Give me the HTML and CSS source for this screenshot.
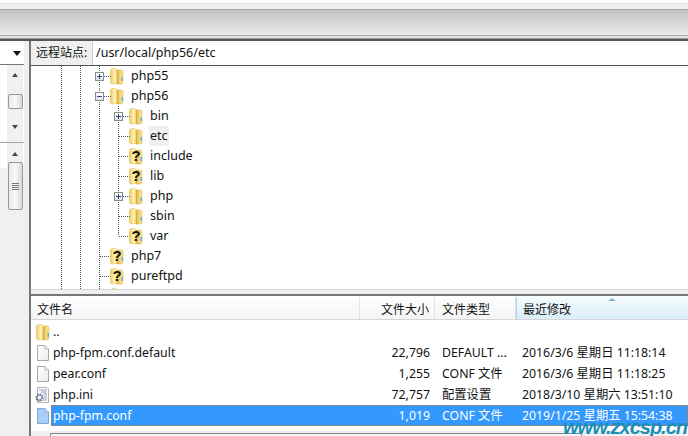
FILE: index.html
```html
<!DOCTYPE html>
<html lang="zh">
<head>
<meta charset="utf-8">
<title>FileZilla</title>
<link rel="stylesheet" href="styles.css">
</head>
<body>
<svg class="defs" width="0" height="0" aria-hidden="true">
  <defs>
    <linearGradient id="fg" x1="0" x2="1" y1="0" y2="0">
      <stop offset="0" stop-color="#eecb62"/><stop offset=".6" stop-color="#fff3b4"/><stop offset="1" stop-color="#f6dd86"/>
    </linearGradient>
    <linearGradient id="fr" x1="0" x2="1" y1="0" y2="0">
      <stop offset="0" stop-color="#d3a53c"/><stop offset=".35" stop-color="#f0cd62"/><stop offset="1" stop-color="#fbe99c"/>
    </linearGradient>
    <linearGradient id="dg" x1="0" x2="1" y1="0" y2="1">
      <stop offset="0" stop-color="#fff"/><stop offset="1" stop-color="#ececec"/>
    </linearGradient>
    <symbol id="folder" viewBox="0 0 14 18">
      <path d="M.5 2.500l2-1h3l2 1.500V16.500l-5.500.5-1.500-1z" fill="url(#fg)" stroke="#dfba55" stroke-width=".5"/>
      <path d="M7 3h5l1 1.500V16l-1 1H7z" fill="url(#fr)" stroke="#d6af4e" stroke-width=".5"/>
      <rect x="11.500" y="10" width="1.500" height="4" fill="#63b0da"/>
    </symbol>
    <symbol id="tee" viewBox="0 0 19 20">
      <path d="M.5 0v20M1 10.500h12" stroke="#555" stroke-dasharray="1 1" fill="none"/>
    </symbol>
    <symbol id="ell" viewBox="0 0 19 20">
      <path d="M.5 0v10M1 10.500h12" stroke="#555" stroke-dasharray="1 1" fill="none"/>
    </symbol>
    <symbol id="doc" viewBox="0 0 14 18">
      <path d="M1.500 1.500h7.500l3.500 3.500v11.500h-11z" fill="url(#dg)" stroke="#a8a8a8"/>
      <path d="M9 1.500v3.500h3.500" fill="#f2f2f2" stroke="#bdbdbd"/>
    </symbol>
    <symbol id="docsel" viewBox="0 0 14 18">
      <path d="M1.500 1.500h7.500l3.500 3.500v11.500h-11z" fill="#a8cdf7" stroke="#7fa8d8"/>
      <path d="M9 1.500v3.500h3.500" fill="#d4e6fb" stroke="#8fb4e0"/>
    </symbol>
    <symbol id="ini" viewBox="0 0 16 18">
      <path d="M3.500 1.500h9.500l1.500 1.500v13.500h-11z" fill="#fff" stroke="#b0b0b0"/>
      <path d="M5 4h8M7 6h6M9 8h4M10 10h3M10 12h3M9 14h4" stroke="#8fa3bd"/>
      <circle cx="5.500" cy="11.500" r="3" fill="none" stroke="#51657f" stroke-width="2.200" stroke-dasharray="1.400 .9"/>
      <circle cx="5.500" cy="11.500" r="2.300" fill="none" stroke="#7f95b2"/>
    </symbol>
  </defs>
</svg>

<header class="toolbar"><div class="toolbar-band"></div></header>

<main class="workspace">
  <aside class="left-pane">
    <div class="combo"><span class="combo-arrow"></span></div>
    <div class="left-tree">
      <div class="scrollbar sb-top">
        <span class="arrow up"></span>
        <span class="thumb short"></span>
        <span class="arrow down"></span>
      </div>
    </div>
    <div class="left-gap"></div>
    <div class="left-list">
      <div class="scrollbar sb-bottom">
        <span class="arrow up"></span>
        <span class="thumb long"><i></i><i></i><i></i><i></i></span>
      </div>
    </div>
  </aside>

  <section class="right-pane">
    <div class="address">
      <span class="address-label">远程站点:</span>
      <span class="address-value">/usr/local/php56/etc</span>
    </div>

    <div class="tree">
      <div class="row"><i class="g"></i><i class="g"></i><span class="conn"><svg class="line"><use href="#tee"/></svg><b class="box plus"></b></span><svg class="folder"><use href="#folder"/></svg><span class="name">php55</span></div>
      <div class="row"><i class="g"></i><i class="g"></i><span class="conn"><svg class="line"><use href="#tee"/></svg><b class="box minus"></b></span><svg class="folder"><use href="#folder"/></svg><span class="name">php56</span></div>
      <div class="row"><i class="g"></i><i class="g"></i><i class="g"></i><span class="conn"><svg class="line"><use href="#tee"/></svg><b class="box plus"></b></span><svg class="folder"><use href="#folder"/></svg><span class="name">bin</span></div>
      <div class="row"><i class="g"></i><i class="g"></i><i class="g"></i><span class="conn"><svg class="line"><use href="#tee"/></svg></span><svg class="folder"><use href="#folder"/></svg><span class="name current">etc</span></div>
      <div class="row"><i class="g"></i><i class="g"></i><i class="g"></i><span class="conn"><svg class="line"><use href="#tee"/></svg></span><span class="q"><svg class="folder"><use href="#folder"/></svg><em>?</em></span><span class="name">include</span></div>
      <div class="row"><i class="g"></i><i class="g"></i><i class="g"></i><span class="conn"><svg class="line"><use href="#tee"/></svg></span><span class="q"><svg class="folder"><use href="#folder"/></svg><em>?</em></span><span class="name">lib</span></div>
      <div class="row"><i class="g"></i><i class="g"></i><i class="g"></i><span class="conn"><svg class="line"><use href="#tee"/></svg><b class="box plus"></b></span><svg class="folder"><use href="#folder"/></svg><span class="name">php</span></div>
      <div class="row"><i class="g"></i><i class="g"></i><i class="g"></i><span class="conn"><svg class="line"><use href="#tee"/></svg></span><svg class="folder"><use href="#folder"/></svg><span class="name">sbin</span></div>
      <div class="row"><i class="g"></i><i class="g"></i><i class="g"></i><span class="conn"><svg class="line"><use href="#ell"/></svg></span><span class="q"><svg class="folder"><use href="#folder"/></svg><em>?</em></span><span class="name">var</span></div>
      <div class="row"><i class="g"></i><i class="g"></i><span class="conn"><svg class="line"><use href="#tee"/></svg></span><span class="q"><svg class="folder"><use href="#folder"/></svg><em>?</em></span><span class="name">php7</span></div>
      <div class="row"><i class="g"></i><i class="g"></i><span class="conn"><svg class="line"><use href="#tee"/></svg></span><span class="q"><svg class="folder"><use href="#folder"/></svg><em>?</em></span><span class="name">pureftpd</span></div>
      <div class="row"><i class="g"></i><i class="g"></i><span class="conn"><svg class="line"><use href="#tee"/></svg></span><svg class="folder"><use href="#folder"/></svg></div>
    </div>

    <div class="pane-gap"></div>

    <div class="listing">
      <div class="list-head">
        <span class="col c-name">文件名</span>
        <span class="col c-size">文件大小</span>
        <span class="col c-type">文件类型</span>
        <span class="col c-date sorted">最近修改</span>
      </div>
      <div class="list-body">
        <div class="list-row">
          <span class="cell c-name"><svg class="file"><use href="#folder"/></svg><span>..</span></span>
        </div>
        <div class="list-row">
          <span class="cell c-name"><svg class="file"><use href="#doc"/></svg><span>php-fpm.conf.default</span></span>
          <span class="cell c-size">22,796</span><span class="cell c-type">DEFAULT ...</span><span class="cell c-date">2016/3/6 星期日 11:18:14</span>
        </div>
        <div class="list-row">
          <span class="cell c-name"><svg class="file"><use href="#doc"/></svg><span>pear.conf</span></span>
          <span class="cell c-size">1,255</span><span class="cell c-type">CONF 文件</span><span class="cell c-date">2016/3/6 星期日 11:18:25</span>
        </div>
        <div class="list-row">
          <span class="cell c-name"><svg class="file ini"><use href="#ini"/></svg><span>php.ini</span></span>
          <span class="cell c-size">72,757</span><span class="cell c-type">配置设置</span><span class="cell c-date">2018/3/10 星期六 13:51:10</span>
        </div>
        <div class="list-row selected">
          <span class="cell c-name"><svg class="file"><use href="#docsel"/></svg><span>php-fpm.conf</span></span>
          <span class="cell c-size">1,019</span><span class="cell c-type">CONF 文件</span><span class="cell c-date">2019/1/25 星期五 15:54:38</span>
        </div>
      </div>
      <div class="hscroll"><span class="hthumb"></span></div>
    </div>
  </section>
</main>
<div class="watermark">www.zxcsp.cn</div>
</body>
</html>
```
FILE: styles.css
```css
* { box-sizing: border-box; }
html, body { margin: 0; height: 100%; }
body {
  width: 688px; height: 436px; overflow: hidden; position: relative;
  background: #f0f0f0; color: #111;
  font: 12.3px "Noto Sans", "Noto Sans CJK SC", sans-serif;
}
.defs { position: absolute; }
.toolbar { height: 41px; background: #fff; padding-top: 3px; border-bottom: 2px solid #555; }
.toolbar-band {
  height: 36px; border-top: 1px solid #e0e0e0;
  background: linear-gradient(#f0f0f0 0 5px, #a4a4a4 5px 6px, #c2c2c2 6px, #eaeaea 31px, #a8a8a8 31px 32px, #e4e4e4 32px 34px, #999 34px);
}
.workspace { display: flex; height: 395px; }
.left-pane { width: 24px; display: flex; flex-direction: column; }
.combo { height: 24px; background: #fff; border-bottom: 1px solid #777; position: relative; }
.combo-arrow { position: absolute; left: 13px; top: 10px; border: 4px solid transparent; border-top: 5px solid #111; border-bottom: 0; width: 0; height: 0; }
.left-tree { height: 76px; background: #fff; padding-left: 7px; }
.left-gap { height: 2px; border-bottom: 1px solid #a8a8a8; }
.left-list { flex: 1; padding-left: 7px; background: linear-gradient(#fff 0 25px, #f0f0f0 25px); }
.scrollbar { width: 16px; height: 100%; background: #f0f0f0; position: relative; display: flex; flex-direction: column; align-items: center; }
.arrow { width: 0; height: 0; border: 3px solid transparent; }
.arrow.up { border-bottom: 4px solid #444; border-top: 0; }
.arrow.down { border-top: 4px solid #444; border-bottom: 0; }
.sb-top .up { margin-top: 8px; }
.sb-top .short { margin-top: 17px; height: 15px; }
.sb-top .down { margin-top: 16px; }
.sb-bottom .up { margin-top: 9px; }
.thumb { width: 15px; border: 1px solid #999; border-radius: 2px; background: linear-gradient(90deg, #e8e8e8, #f8f8f8 50%, #d8d8d8); display: flex; flex-direction: column; align-items: center; justify-content: center; gap: 1px; }
.thumb.long { margin-top: 6px; height: 48px; }
.thumb i { width: 7px; height: 1px; background: #777; }

.right-pane { flex: 1; min-width: 0; margin-left: 5px; border-left: 2px solid #777; display: flex; flex-direction: column; }
.address { height: 25px; display: flex; background: #fff; border-bottom: 1px solid #555; align-items: stretch; }
.address-label { width: 62px; background: #f0f0f0; border-right: 1px solid #d0d0d0; padding-left: 5px; font-size: 12px; line-height: 24px; white-space: nowrap; }
.address-value { padding-left: 3px; font-size: 12.5px; line-height: 24px; }

.tree { height: 224px; background: #fff; overflow: hidden; padding-left: 30px; font-size: 12.5px; border-bottom: 1px solid #d8d8d8; }
.row { height: 20px; display: flex; align-items: center; }
.g { width: 19px; height: 20px; flex: none; background: repeating-linear-gradient(#555 0 1px, transparent 1px 2px) left / 1px 100% no-repeat; }
.conn { width: 19px; height: 20px; flex: none; position: relative; }
.line { width: 19px; height: 20px; display: block; }
.box { position: absolute; left: -4px; top: 6px; width: 9px; height: 9px; border: 1px solid #8a8a8a; background: linear-gradient(#fff, #dde); }
.box::before { content: ""; position: absolute; left: 1px; top: 3px; width: 5px; height: 1px; background: #2b4a8c; }
.plus::after { content: ""; position: absolute; left: 3px; top: 1px; width: 1px; height: 5px; background: #2b4a8c; }
.folder { width: 14px; height: 18px; flex: none; margin-left: -8px; margin-right: 6px; display: block; }
.q { display: flex; position: relative; flex: none; }
.q em { position: absolute; left: -8px; top: -1px; width: 14px; text-align: center; font: bold 15px/20px "Liberation Sans", sans-serif; color: #111; }
.name { padding: 0 1px; line-height: 20px; height: 20px; }
.current { background: #f0f0f0; }

.pane-gap { height: 6px; border-bottom: 2px solid #777; background: #f0f0f0; }
.listing { flex: 1; background: #fff; overflow: hidden; display: flex; flex-direction: column; }
.list-head { height: 24px; flex: none; display: flex; padding-top: 1px; background: linear-gradient(#fff, #f4f4f4); border-bottom: 1px solid #d5d5d5; font-size: 12px; }
.col { display: flex; align-items: center; padding-top: 1px; border-right: 1px solid #e3e3e3; white-space: nowrap; }
.list-body { flex: 1; padding-top: 1px; }
.list-row { height: 21px; display: flex; align-items: center; white-space: nowrap; position: relative; }
.c-name { width: 329px; flex: none; }
.col.c-name { padding-left: 6px; }
.c-size { width: 75px; flex: none; text-align: right; padding-right: 5px; }
.col.c-size { justify-content: flex-end; }
.c-type { width: 81px; flex: none; padding-left: 7px; }
.c-date { flex: 1; padding-left: 6px; }
.sorted { background: linear-gradient(#f4fbff, #d9eef9); border-left: 1px solid #a9d6ee; border-right: 0; position: relative; }
.sorted::before { content: ""; position: absolute; left: 91px; top: 1px; border: 4px solid transparent; border-top: 0; border-bottom: 3px solid #8ab4cc; }
.cell { line-height: 20px; }
.cell.c-name { display: flex; align-items: center; padding-left: 5px; }
.file { width: 14px; height: 18px; flex: none; margin-right: 3px; }
.file.ini { width: 16px; margin-left: -2px; }
.selected { background: linear-gradient(90deg, #fff 20px, #3399ff 20px); color: #fff; }
.selected::after { content: ""; position: absolute; inset: 0 0 0 20px; border: 1px dotted #c9791c; }
.hscroll { height: 5px; flex: none; background: #f0f0f0; padding: 2px 0 0 19px; }
.hthumb { display: block; width: 532px; height: 4px; background: #f4f4f4; border: 1px solid #888; border-bottom: 0; }
.watermark { position: absolute; right: 1px; bottom: -2px; font: italic bold 20px/22px "Liberation Sans", sans-serif; color: #1a8fb8; letter-spacing: -1px; }
```
